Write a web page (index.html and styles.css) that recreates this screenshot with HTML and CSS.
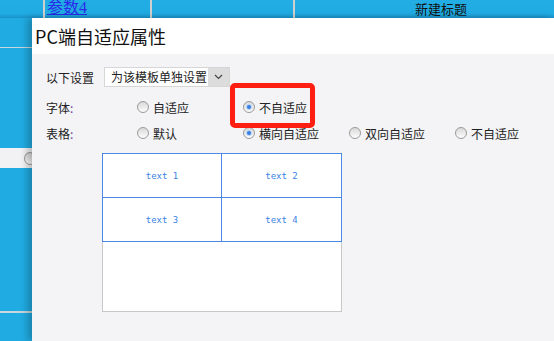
FILE: index.html
```html
<!DOCTYPE html>
<html lang="zh-CN">
<head>
    <meta charset="UTF-8">
    <title>PC端自适应属性</title>
    <link rel="stylesheet" href="styles.css">
</head>
<body>

<div class="page">
    <div class="head-row">
        <div class="head-cell c0"></div>
        <div class="head-cell c1"><a href="#">参数4</a></div>
        <div class="head-cell c2"></div>
        <div class="head-cell c3">新建标题</div>
    </div>
    <div class="page-body">
        <div class="gap g1"></div>
        <div class="rule"></div>
        <div class="gap g2"></div>
        <div class="light-row"><span class="radio"></span></div>
        <div class="gap g3"></div>
        <div class="rule thick"></div>
    </div>
</div>

<div class="dialog">
    <div class="dialog-title">PC端自适应属性</div>
    <div class="dialog-body">
        <div class="form-row first">
            <span class="label">以下设置</span>
            <div class="select">
                <span class="select-text">为该模板单独设置</span>
                <span class="select-arrow">
                    <svg width="9" height="6" viewBox="0 0 9 6"><polyline points="1,1 4.5,4.5 8,1" fill="none" stroke="#444" stroke-width="1.2"/></svg>
                </span>
            </div>
        </div>
        <div class="form-row font-row">
            <span class="label">字体<span class="colon">:</span></span>
            <label class="option"><span class="radio"></span>自适应</label>
            <label class="option"><span class="radio checked"></span>不自适应</label>
        </div>
        <div class="form-row table-row">
            <span class="label">表格<span class="colon">:</span></span>
            <label class="option"><span class="radio"></span>默认</label>
            <label class="option"><span class="radio checked"></span>横向自适应</label>
            <label class="option"><span class="radio"></span>双向自适应</label>
            <label class="option"><span class="radio"></span>不自适应</label>
        </div>
        <div class="preview">
            <div class="preview-grid">
                <div class="preview-cell">text 1</div>
                <div class="preview-cell">text 2</div>
                <div class="preview-cell">text 3</div>
                <div class="preview-cell">text 4</div>
            </div>
        </div>
    </div>
    <div class="highlight"></div>
</div>

</body>
</html>
```

FILE: styles.css
```css
body { margin: 0; background: #20ace3; font-family: "Noto Sans CJK SC", "Noto Sans", sans-serif; color: #222; overflow: hidden; }
.page { width: 554px; height: 341px; }
.head-row { display: flex; height: 18px; background: linear-gradient(#22aee5 0%, #20ace3 75%, #1a92c9 100%); }
.head-cell { height: 18px; border-right: 2px solid #cfcfcf; box-sizing: border-box; }
.c0 { width: 45px; }
.c1 { width: 107px; padding-left: 2px; }
.c2 { width: 143px; }
.c3 { flex: 1; border-right: none; padding-left: 120px; font-size: 13px; line-height: 17px; color: #111; }
.c1 a { font-family: "Liberation Serif", "Noto Sans CJK SC", serif; font-size: 16px; line-height: 16px; color: #2a2ae8; text-decoration: underline; display: block; }
.page-body { display: flex; flex-direction: column; }
.g1 { height: 29px; }
.rule { height: 1px; width: 40px; background: #c9d6de; }
.rule.thick { height: 2px; }
.g2 { height: 100px; }
.light-row { height: 20px; width: 40px; background: #f2f2f4; display: flex; align-items: center; padding-left: 24px; box-sizing: border-box; }
.g3 { height: 143px; }

.dialog { position: absolute; left: 32px; top: 18px; right: 0; bottom: 0; background: #f4f4f6; box-shadow: -5px 0 7px rgba(0,0,0,0.22); }
.dialog-title { height: 36px; line-height: 37px; background: #fff; font-size: 18px; padding-left: 3px; color: #111; }
.dialog-body { padding: 13px 0 0 14px; font-size: 12px; }
.form-row { display: flex; align-items: center; height: 20px; }
.font-row { margin-top: 10px; }
.table-row { margin-top: 6px; }
.label { width: 91px; flex: none; }
.first .label { width: 58px; }
.colon { color: #6b3fa0; }
.select { display: flex; height: 20px; width: 126px; box-sizing: border-box; border: 1px solid #d6d6d6; background: #fff; }
.select-text { flex: 1; padding-left: 6px; line-height: 18px; }
.select-arrow { width: 21px; background: #dcdcdc; display: flex; align-items: center; justify-content: center; }
.option { display: flex; align-items: center; width: 106px; flex: none; }
.radio { width: 12px; height: 12px; box-sizing: border-box; border: 1px solid #9a9a9a; border-radius: 50%; background: linear-gradient(#d8d8d8, #fdfdfd); margin-right: 4px; display: flex; align-items: center; justify-content: center; }
.radio.checked::after { content: ""; width: 4px; height: 4px; border-radius: 50%; background: #3b7fe2; box-shadow: 0 0 0 1px #b9d3f5; }
.light-row .radio { width: 13px; height: 13px; }

.preview { margin: 10px 0 0 56px; width: 240px; height: 159px; box-sizing: border-box; border: 1px solid #c8c8c8; background: #fff; }
.preview-grid { display: grid; grid-template-columns: 119px 120px; margin: -1px -1px 0; border-top: 1px solid #4a89e8; border-left: 1px solid #4a89e8; }
.preview-cell { height: 43px; border-right: 1px solid #4a89e8; border-bottom: 1px solid #4a89e8; display: flex; align-items: center; justify-content: center; font-family: "DejaVu Sans Mono", monospace; font-size: 9px; color: #3b82e6; }

.highlight { position: absolute; left: 198px; top: 65px; width: 85px; height: 45px; box-sizing: border-box; border: 5px solid #ff1e12; border-radius: 5px; }
```
